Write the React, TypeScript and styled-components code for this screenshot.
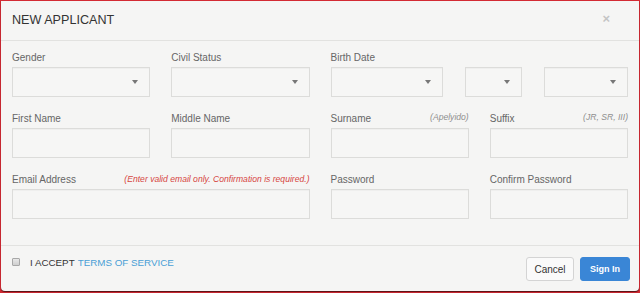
import React from "react";
import styled, { createGlobalStyle } from "styled-components";

const Global = createGlobalStyle`
  html, body { margin: 0; padding: 0; background: #d32a33; }
  body { font-family: "Liberation Sans", Arial, sans-serif; }
  * { box-sizing: border-box; }
`;

const Frame = styled.div`
  width: 640px;
  height: 293px;
  padding: 1px 1px 2px 1px;
  background: #d32a33;
`;

const Modal = styled.div`
  width: 638px;
  height: 290px;
  background: #f5f5f4;
  border-radius: 0 0 4px 4px;
  box-shadow: 0 1px 1px rgba(0, 0, 0, 0.6);
  display: flex;
  flex-direction: column;
`;

const Header = styled.div`
  height: 40px;
  border-bottom: 1px solid #e2e2e0;
  display: flex;
  align-items: center;
  justify-content: space-between;
  padding: 0 29px 1px 11px;
`;

const Title = styled.h4`
  margin: 0;
  font-size: 12.6px;
  font-weight: normal;
  color: #333;
`;

const Close = styled.span`
  font-size: 13px;
  font-weight: bold;
  color: #c4c4c4;
  line-height: 1;
  margin-top: -3px;
`;

const Body = styled.div`
  padding: 9px 11px 26px 11px;
  display: grid;
  grid-template-columns: repeat(4, 1fr);
  column-gap: 21px;
  row-gap: 14px;
`;

const Field = styled.div<{ $span?: number }>`
  grid-column: span ${(p) => p.$span ?? 1};
  display: flex;
  flex-direction: column;
`;

const LabelRow = styled.div`
  height: 14px;
  margin-bottom: 3px;
  display: flex;
  align-items: center;
  justify-content: space-between;
`;

const Label = styled.label`
  font-size: 10px;
  line-height: 14px;
  color: #666;
  margin-top: 1px;
`;

const Hint = styled.span<{ $error?: boolean }>`
  font-size: 8.6px;
  font-style: italic;
  color: ${(p) => (p.$error ? "#d64541" : "#8e8e8e")};
  margin-top: ${(p) => (p.$error ? "0" : "-3px")};
`;

const Input = styled.div`
  height: 30px;
  border: 1px solid #dcdcda;
  background: #f6f6f5;
  box-shadow: inset 0 1px 1px rgba(0, 0, 0, 0.03);
`;

const Select = styled(Input)`
  display: flex;
  align-items: center;
  justify-content: flex-end;
  padding-right: 11px;
`;

const Arrow = styled.span`
  width: 0;
  height: 0;
  border-left: 3px solid transparent;
  border-right: 3px solid transparent;
  border-top: 4px solid #777;
`;

const DateRow = styled.div`
  display: grid;
  grid-template-columns: 111fr 57fr 83fr;
  column-gap: 22px;
`;

const Footer = styled.div`
  border-top: 1px solid #e2e2e0;
  padding: 11px 9px 9px 11px;
  display: flex;
  align-items: center;
  justify-content: space-between;
`;

const Accept = styled.div`
  display: flex;
  align-items: center;
  font-size: 9.8px;
  color: #333;
  margin-top: -14px;
`;

const Check = styled.span`
  width: 8px;
  height: 8px;
  border: 1px solid #a8a8a8;
  border-radius: 1px;
  background: linear-gradient(#e8e8e8, #cfcfcf);
  margin-right: 10px;
`;

const Link = styled.span`
  color: #4a9fd6;
  margin-left: 3px;
`;

const Buttons = styled.div`
  display: flex;
  gap: 6px;
`;

const Button = styled.button<{ $primary?: boolean }>`
  height: 24px;
  padding: 0;
  border-radius: 3px;
  font-family: "Liberation Sans", Arial, sans-serif;
  font-size: ${(p) => (p.$primary ? "9px" : "10px")};
  font-weight: ${(p) => (p.$primary ? "bold" : "normal")};
  color: ${(p) => (p.$primary ? "#fff" : "#333")};
  background: ${(p) => (p.$primary ? "#3a86d6" : "#fafafa")};
  border: 1px solid ${(p) => (p.$primary ? "#3a86d6" : "#d4d4d4")};
  width: ${(p) => (p.$primary ? "50px" : "48px")};
`;

const SelectBox = () => (
  <Select>
    <Arrow />
  </Select>
);

export default function App() {
  return (
    <>
      <Global />
      <Frame>
        <Modal>
          <Header>
            <Title>NEW APPLICANT</Title>
            <Close>×</Close>
          </Header>
          <Body>
            <Field>
              <LabelRow><Label>Gender</Label></LabelRow>
              <SelectBox />
            </Field>
            <Field>
              <LabelRow><Label>Civil Status</Label></LabelRow>
              <SelectBox />
            </Field>
            <Field $span={2}>
              <LabelRow><Label>Birth Date</Label></LabelRow>
              <DateRow>
                <SelectBox />
                <SelectBox />
                <SelectBox />
              </DateRow>
            </Field>

            <Field>
              <LabelRow><Label>First Name</Label></LabelRow>
              <Input />
            </Field>
            <Field>
              <LabelRow><Label>Middle Name</Label></LabelRow>
              <Input />
            </Field>
            <Field>
              <LabelRow>
                <Label>Surname</Label>
                <Hint>(Apelyido)</Hint>
              </LabelRow>
              <Input />
            </Field>
            <Field>
              <LabelRow>
                <Label>Suffix</Label>
                <Hint>(JR, SR, III)</Hint>
              </LabelRow>
              <Input />
            </Field>

            <Field $span={2}>
              <LabelRow>
                <Label>Email Address</Label>
                <Hint $error>(Enter valid email only. Confirmation is required.)</Hint>
              </LabelRow>
              <Input />
            </Field>
            <Field>
              <LabelRow><Label>Password</Label></LabelRow>
              <Input />
            </Field>
            <Field>
              <LabelRow><Label>Confirm Password</Label></LabelRow>
              <Input />
            </Field>
          </Body>
          <Footer>
            <Accept>
              <Check />
              I ACCEPT<Link>TERMS OF SERVICE</Link>
            </Accept>
            <Buttons>
              <Button>Cancel</Button>
              <Button $primary>Sign In</Button>
            </Buttons>
          </Footer>
        </Modal>
      </Frame>
    </>
  );
}
